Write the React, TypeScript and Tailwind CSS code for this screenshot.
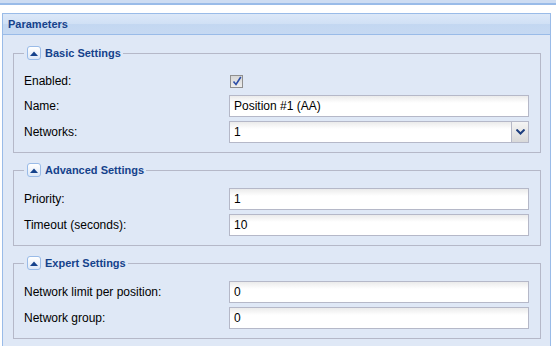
const font = { fontFamily: '"Liberation Sans", Arial, sans-serif' };

const Toggle = () => (
  <span className="flex h-[14px] w-[14px] items-center justify-center rounded-[3px] border border-[#99bbe8] bg-[linear-gradient(#ffffff,#dde8f7)]">
    <svg width="8" height="5" viewBox="0 0 8 5">
      <path d="M0 5 L4 0.5 L8 5 Z" fill="#15428b" />
    </svg>
  </span>
);

const Section = ({ title, first, children }: { title: string; first?: boolean; children: React.ReactNode }) => (
  <fieldset className={`mx-[10px] border border-[#b5b8c8] pl-[10px] pr-[11px] pb-[9px] ${first ? "mt-[11px]" : "mt-[10px]"}`}>
    <legend className="flex h-[14px] items-center gap-[4px] pl-[3px] pr-[2px] text-[11px] font-bold leading-[14px] text-[#15428b]">
      <Toggle />
      {title}
    </legend>
    <div className="flex flex-col gap-[4px] pt-[11px]">{children}</div>
  </fieldset>
);

const Row = ({ label, short, children }: { label: string; short?: boolean; children: React.ReactNode }) => (
  <div className={`flex items-center ${short ? "h-[20px]" : "h-[22px]"}`}>
    <span className="w-[205px] text-[12px] text-black">{label}</span>
    {children}
  </div>
);

const TextInput = ({ value }: { value: string }) => (
  <div className="flex h-[22px] w-[300px] items-center border border-[#b5b8c8] bg-[linear-gradient(#ebebeb,#ffffff_7px)] pl-[4px] text-[12px] text-black">
    {value}
  </div>
);

export default function App() {
  return (
    <div className="h-[346px] w-[556px] overflow-hidden bg-white" style={font}>
      <div className="h-[5px] border-b-2 border-[#99bbe8] bg-[#cddcf2]" />
      <div className="ml-[2px] mt-[8px] w-[549px] border border-[#99bbe8] bg-[#dfe8f6] pb-[20px]">
        <div className="flex h-[21px] items-center border-b border-[#99bbe8] bg-[linear-gradient(#dce8f8,#d0e0f5_50%,#c3d7f1_50%,#c6d9f2)] pl-[5px] text-[11px] font-bold text-[#15428b]">
          Parameters
        </div>
        <Section title="Basic Settings" first>
          <Row label="Enabled:" short>
            <span className="ml-[1px] flex h-[13px] w-[13px] items-center justify-center border border-[#8f8f8f] bg-[linear-gradient(#d6d6d6,#eeeeee)]">
              <svg width="10" height="10" viewBox="0 0 10 10">
                <path d="M1.5 5.5 L4 8.5 L8.8 1" stroke="#2c4ea8" strokeWidth="1.6" fill="none" />
              </svg>
            </span>
          </Row>
          <Row label="Name:">
            <TextInput value="Position #1 (AA)" />
          </Row>
          <Row label="Networks:">
            <div className="flex h-[22px] w-[300px] border border-[#b5b8c8] bg-[linear-gradient(#ebebeb,#ffffff_7px)] text-[12px] text-black">
              <span className="flex flex-1 items-center pl-[4px]">1</span>
              <span className="flex w-[17px] items-center justify-center border-l border-[#b5b8c8] bg-[linear-gradient(#f4f4f4,#d9d9d9)]">
                <svg width="9" height="6" viewBox="0 0 9 6">
                  <path d="M0.5 0.5 L4.5 4.5 L8.5 0.5" stroke="#1f3f7f" strokeWidth="2" fill="none" />
                </svg>
              </span>
            </div>
          </Row>
        </Section>
        <Section title="Advanced Settings">
          <Row label="Priority:">
            <TextInput value="1" />
          </Row>
          <Row label="Timeout (seconds):">
            <TextInput value="10" />
          </Row>
        </Section>
        <Section title="Expert Settings">
          <Row label="Network limit per position:">
            <TextInput value="0" />
          </Row>
          <Row label="Network group:">
            <TextInput value="0" />
          </Row>
        </Section>
      </div>
    </div>
  );
}
